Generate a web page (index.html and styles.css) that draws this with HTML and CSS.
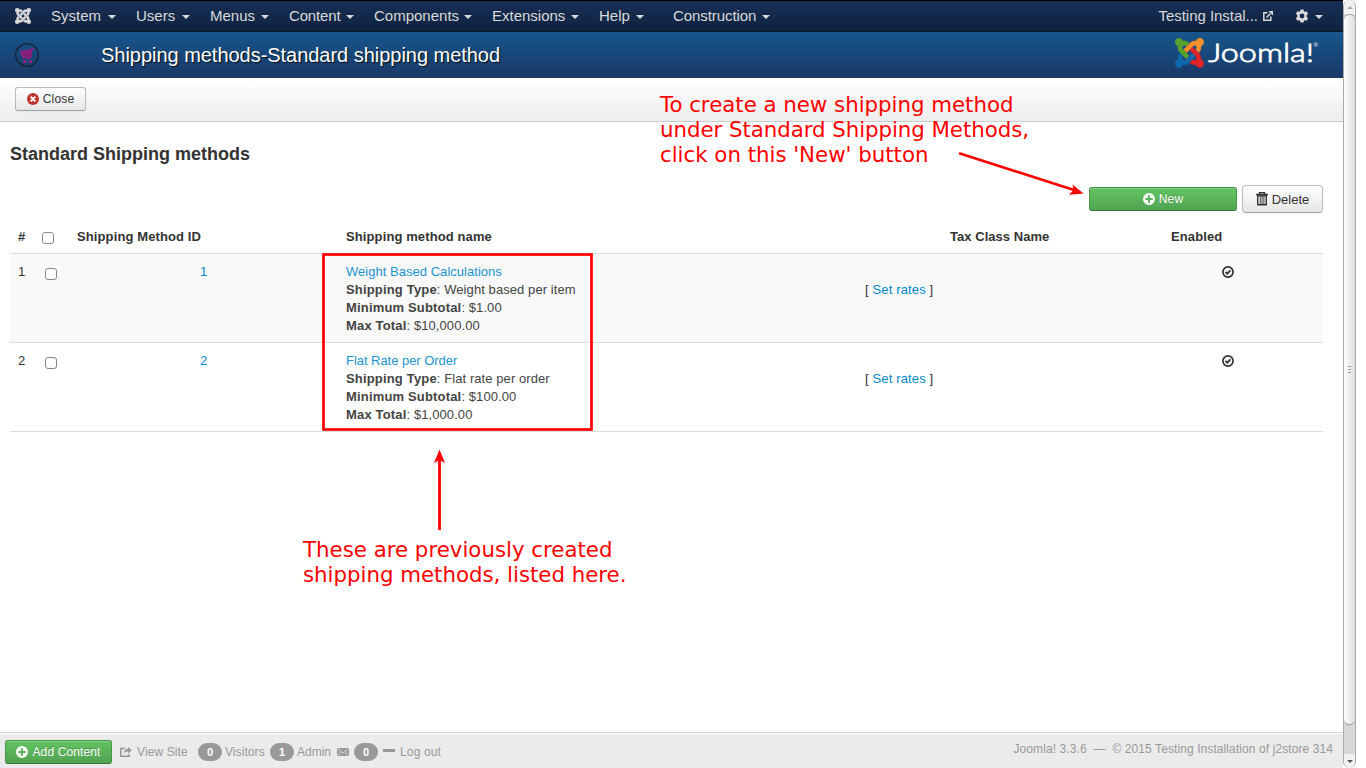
FILE: index.html
```html
<!DOCTYPE html>
<html lang="en">
<head>
<meta charset="utf-8">
<title>Shipping methods-Standard shipping method</title>
<link rel="stylesheet" href="styles.css">
</head>
<body>
<svg class="defs" width="0" height="0">
  <defs>
    <path id="arm" d="M16.719 14.759L14.22 17.26l-2.37 2.37-.462.466c-1.368 1.365-3.297 1.83-5.047 1.397-.327 1.424-1.604 2.49-3.13 2.49C1.438 23.983 0 22.547 0 20.772c0-1.518 1.055-2.789 2.469-3.123-.446-1.76.016-3.705 1.396-5.08l.179-.18 2.37 2.37-.184.181c-.769.779-.769 2.024 0 2.789.771.78 2.022.78 2.787 0l.465-.465 2.367-2.371 2.502-2.506z"/>
    <symbol id="plus" viewBox="0 0 12 12"><path fill-rule="evenodd" d="M6 0a6 6 0 1 0 0 12A6 6 0 0 0 6 0zM5 2.300h2V5h2.700v2H7v2.700H5V7H2.300V5H5z"/></symbol>
    <symbol id="check" viewBox="0 0 12 12"><circle cx="6" cy="6" r="5.100" fill="none" stroke="currentColor" stroke-width="1.700"/><path d="M3.500 6l1.800 1.700 3.100-3.300" fill="none" stroke="currentColor" stroke-width="1.800"/></symbol>
  </defs>
</svg>
<div class="window">
  <div class="page">
    <nav class="navbar">
      <svg class="brand" viewBox="0 0 24 24"><use href="#arm"/><use href="#arm" transform="rotate(90 12 12)"/><use href="#arm" transform="rotate(180 12 12)"/><use href="#arm" transform="rotate(270 12 12)"/></svg>
      <ul class="menu">
        <li class="w-system">System<i class="caret"></i></li>
        <li class="w-users">Users<i class="caret"></i></li>
        <li class="w-menus">Menus<i class="caret"></i></li>
        <li class="w-content">Content<i class="caret"></i></li>
        <li class="w-components">Components<i class="caret"></i></li>
        <li class="w-extensions">Extensions<i class="caret"></i></li>
        <li class="w-help">Help<i class="caret"></i></li>
        <li class="w-construction">Construction<i class="caret"></i></li>
      </ul>
      <div class="site">Testing Instal...
        <svg class="ext" viewBox="0 0 10 10"><path d="M4.500 1.700H.8v7.500h7V5.500M3.500 6.500l4-4" fill="none" stroke="currentColor" stroke-width="1.500"/><path d="M5.500 0H10v4.500z"/></svg>
      </div>
      <div class="gear">
        <svg viewBox="0 0 14 14"><path fill-rule="evenodd" d="M5.500.500h3l.4 1.700 1 .6 1.700-.6 1.500 2.500L11.800 6v2l1.300 1.300-1.500 2.500-1.700-.6-1 .6-.4 1.700h-3l-.4-1.700-1-.6-1.700.6L.900 9.300 2.200 8V6L.900 4.700l1.500-2.500 1.700.6 1-.6zM7 4.600a2.400 2.400 0 1 0 0 4.800 2.400 2.400 0 0 0 0-4.800z"/></svg><i class="caret"></i>
      </div>
    </nav>
    <header class="header">
      <svg class="cart" viewBox="0 0 24 24"><circle cx="12" cy="12" r="11.300" fill="none" stroke="#18222f" stroke-width="1.300"/><path d="M5 7.500l10-1 1.500-1.600 3 .2-.3 1-1.700.2-1.200 9.200H7.500z" fill="#922280"/><path d="M5.700 9.500l11.700-.7M6.300 12l10.800-.4M8.600 7.200l1.500 8M12 6.800l.5 8.500M15 6.500l-.5 9" stroke="#68216f" stroke-width=".5"/><path d="M8 17.200h3v2.900H8zM14 17.200h3v2.900h-3z" fill="#922280"/></svg>
      <h1>Shipping methods-Standard shipping method</h1>
      <svg class="logo" viewBox="0 0 146 32">
        <g class="mark" transform="translate(1.300 1.300) scale(1.180 1.220)"><use href="#arm" color="#1068ae"/><use href="#arm" color="#57a12b" transform="rotate(90 12 12)"/><use href="#arm" color="#fa9029" transform="rotate(180 12 12)"/><use href="#arm" color="#e32427" transform="rotate(270 12 12)"/></g>
        <text class="wordmark" x="34" y="24.500" textLength="106" lengthAdjust="spacingAndGlyphs">Joomla!</text>
        <text class="reg" x="139.500" y="9.500">®</text>
      </svg>
    </header>
    <div class="toolbar">
      <button class="btn close"><svg viewBox="0 0 12 12"><circle cx="6" cy="6" r="6" fill="#bd362f"/><path d="M3.700 3.700l4.600 4.600M8.300 3.700L3.700 8.300" stroke="#fff" stroke-width="1.800"/></svg><span>Close</span></button>
    </div>
    <main class="content">
      <h2>Standard Shipping methods</h2>
      <div class="actions">
        <button class="btn success new"><svg><use href="#plus"/></svg><span>New</span></button>
        <button class="btn delete"><svg viewBox="0 0 12 14"><path d="M3.500 1.800V.600h5v1.200M0 2.500h12M1.700 3v9.800h8.600V3" fill="none" stroke="currentColor" stroke-width="1.400"/><path d="M1 3.200h10v1.300H1z"/><path d="M4.300 4v9M6.100 4v9M7.900 4v9" stroke="currentColor" stroke-width=".9"/></svg><span>Delete</span></button>
      </div>
      <table class="methods">
        <colgroup><col class="c-num"><col class="c-check"><col class="c-id"><col class="c-name"><col class="c-tax"><col class="c-enabled"></colgroup>
        <thead>
          <tr><th>#</th><th class="check-head"><i class="box"></i></th><th>Shipping Method ID</th><th>Shipping method name</th><th class="tax-head">Tax Class Name</th><th class="enabled-head">Enabled</th></tr>
        </thead>
        <tbody>
          <tr class="odd">
            <td>1</td><td class="check-cell"><i class="box"></i></td><td class="center"><a>1</a></td>
            <td class="details"><a>Weight Based Calculations</a><br><b>Shipping Type</b>: Weight based per item<br><b>Minimum Subtotal</b>: $1.00<br><b>Max Total</b>: $10,000.00</td>
            <td class="rates"><br>[ <a>Set rates</a> ]</td><td class="center"><svg class="ok"><use href="#check"/></svg></td>
          </tr>
          <tr>
            <td>2</td><td class="check-cell"><i class="box"></i></td><td class="center"><a>2</a></td>
            <td class="details"><a class="flat">Flat Rate per Order</a><br><b>Shipping Type</b>: Flat rate per order<br><b>Minimum Subtotal</b>: $100.00<br><b>Max Total</b>: $1,000.00</td>
            <td class="rates"><br>[ <a>Set rates</a> ]</td><td class="center"><svg class="ok"><use href="#check"/></svg></td>
          </tr>
        </tbody>
      </table>
    </main>
    <footer class="status">
      <button class="btn success add"><svg><use href="#plus"/></svg><span>Add Content</span></button>
      <svg class="share" viewBox="0 0 12 10"><path d="M5 1.500H.8v7.700h8.400V7" fill="none" stroke="currentColor" stroke-width="1.500"/><path d="M8 0l4 3.300-4 3.200V4.500C6 4.500 5 5 4 6.500c0-3 1.500-4.500 4-4.700z"/></svg>
      <span class="view">View Site</span>
      <span class="badge">0</span><span class="visitors">Visitors</span>
      <span class="badge">1</span><span class="admin">Admin</span>
      <svg class="mail" viewBox="0 0 12 8"><path d="M0 0h12v8H0z"/><path d="M.500.500L6 5 11.500.500M.500 7.500L4.300 4M11.500 7.500L7.700 4" fill="none" stroke="#ebebeb" stroke-width=".8"/></svg>
      <span class="badge">0</span><i class="dash"></i><span class="logout">Log out</span>
      <span class="copy">Joomla! 3.3.6 &nbsp;—&nbsp; © 2015 Testing Installation of j2store 314</span>
    </footer>
  </div>
  <aside class="scrollbar">
    <div class="up"><i></i></div>
    <div class="thumb"><i></i><i></i><i></i></div>
    <div class="down"><i></i></div>
  </aside>
  <svg class="notes" viewBox="0 0 1356 768">
    <rect x="323.500" y="254.500" width="268" height="175" fill="none" stroke="#f00" stroke-width="2.700"/>
    <path d="M960 153.500L1074 190" stroke="#f00" stroke-width="2.500" stroke-linecap="round"/>
    <path d="M1083.500 193.500l-14.500 1.200 4.500-4.700-1-5.500z" fill="#f00"/>
    <path d="M439.500 530V460" stroke="#f00" stroke-width="2.800"/>
    <path d="M439.500 449.500l5.500 13.500-5.500-3-5.500 3z" fill="#f00"/>
    <text x="660" y="112" textLength="353.500">To create a new shipping method</text>
    <text x="660" y="137" textLength="369">under Standard Shipping Methods,</text>
    <text x="660" y="162" textLength="268.500">click on this 'New' button</text>
    <text x="303" y="557" textLength="309.500">These are previously created</text>
    <text x="303" y="582" textLength="323.500">shipping methods, listed here.</text>
  </svg>
</div>
</body>
</html>
```
FILE: styles.css
```css
* { box-sizing: border-box; }
body { margin: 0; background: #fff; color: #333; font: 13px/18px "Liberation Sans", Arial, sans-serif; overflow: hidden; }
.defs { position: absolute; }
.window { position: relative; display: flex; width: 1356px; height: 768px; }
.page { display: flex; flex-direction: column; width: 1343px; }
.navbar { display: flex; align-items: center; height: 32px; padding-left: 15px; border-top: 1px solid #000; border-bottom: 1px solid #0b1626; background: linear-gradient(#172f57, #10223e); color: #d9d9d9; font-size: 15px; }
.brand { width: 16px; height: 16px; margin-right: 20px; fill: #d9d9d9; stroke: #d9d9d9; stroke-width: .6px; }
.menu { display: flex; flex: 1; margin: 0; padding: 0; list-style: none; }
.menu li { display: flex; align-items: center; justify-content: space-between; margin-right: 20px; }
.w-system { width: 65px; }
.w-users { width: 54px; }
.w-menus { width: 59px; }
.menu .w-content { width: 65px; letter-spacing: -.15px; }
.w-components { width: 98px; }
.w-extensions { width: 87px; }
.menu .w-help { width: 45px; margin-right: 29px; }
.w-construction { width: 97px; letter-spacing: -.08px; }
.caret { width: 8px; border: 4px solid transparent; border-top-color: currentColor; border-bottom: 0; margin-top: 2px; }
.site { display: flex; align-items: center; gap: 5px; margin-right: 22px; letter-spacing: -.03px; }
.ext { width: 10px; height: 10px; fill: currentColor; }
.gear { display: flex; align-items: center; gap: 6px; margin-right: 20px; }
.gear svg { width: 14px; height: 14px; fill: currentColor; }
.header { display: flex; align-items: center; height: 46px; padding: 0 23px 0 15px; background: linear-gradient(#17568c, #1a3867); color: #fff; }
.cart { width: 24px; height: 24px; margin-right: 62px; }
h1 { flex: 1; margin: 0; font-size: 20px; font-weight: 400; line-height: 46px; letter-spacing: -.03px; text-shadow: 1px 1px 1px rgba(0,0,0,.8); }
.logo { width: 146px; height: 32px; margin-top: -5px; }
.mark { fill: currentColor; stroke: currentColor; stroke-width: .6px; }
.mark use { fill: currentColor; stroke: currentColor; }
.wordmark { font: 300 25.5px Lato, sans-serif; fill: #fff; stroke: #fff; stroke-width: .8px; }
.reg { font-size: 6px; fill: #fff; }
.toolbar { height: 44px; padding: 9px 15px 0; border-bottom: 1px solid #ccc; background: linear-gradient(#fff, #ededed); }
.btn { display: flex; align-items: center; justify-content: center; gap: 4px; padding: 0; border: 1px solid #bbb; border-bottom-color: #a2a2a2; border-radius: 3px; background: linear-gradient(#fff, #e6e6e6); box-shadow: inset 0 1px 0 rgba(255,255,255,.2), 0 1px 2px rgba(0,0,0,.05); color: #333; font: 12px/16px "Liberation Sans", Arial, sans-serif; }
.btn svg { width: 12px; height: 12px; margin-top: -1px; fill: currentColor; }
.close { width: 71px; height: 24px; letter-spacing: .2px; }
.success { border-color: #499249; border-bottom-color: #387038; background: linear-gradient(#62c462, #51a351); color: #fff; text-shadow: 0 -1px 0 rgba(0,0,0,.25); box-shadow: inset 0 1px 0 rgba(255,255,255,.2); }
.content { flex: 1; padding: 22px 20px 0 10px; }
h2 { margin: 0; font-size: 18px; line-height: 20px; }
.actions { display: flex; align-items: center; justify-content: flex-end; gap: 5px; margin-top: 21px; height: 28px; }
.new { width: 148px; height: 24px; letter-spacing: .2px; }
.delete { width: 81px; height: 28px; border-radius: 4px; font-size: 13px; }
.delete span { padding-top: 1px; }
.delete svg { width: 12px; height: 14px; }
.methods { width: 1313px; margin-top: 7px; border-collapse: separate; border-spacing: 0; table-layout: fixed; }
.methods th, .methods td { padding: 8px 0 8px 8px; text-align: left; vertical-align: top; }
.methods th { height: 33px; padding-bottom: 7px; letter-spacing: .11px; }
.methods td { height: 89px; padding-top: 9px; padding-bottom: 7px; border-top: 1px solid #ddd; }
.methods tr:last-child td { height: 90px; border-bottom: 1px solid #ddd; }
.methods thead tr:last-child th { height: 33px; }
.methods a { color: #08c; }
.odd td { background: #f9f9f9; }
.c-num { width: 24px; }
.c-check { width: 35px; }
.c-id { width: 269px; }
.c-name { width: 519px; }
.c-tax { width: 276px; }
.methods .center { padding-right: 8px; text-align: center; }
.methods .details { color: #444; letter-spacing: .08px; }
.details b { letter-spacing: .17px; }
.methods .details a { color: #1e93d2; letter-spacing: .03px; }
.methods .details .flat { letter-spacing: -.04px; }
.methods .rates { letter-spacing: .14px; }
.methods .tax-head { padding-left: 93px; letter-spacing: .04px; }
.methods .enabled-head { padding-left: 38px; }
.box { display: block; width: 12px; height: 12px; margin-top: 4px; border: 1px solid #888; border-radius: 3px; background: #fff; }
.methods .check-cell { padding-left: 11px; }
.check-cell .box { margin-top: 5px; }
.ok { width: 12px; height: 12px; margin-top: 3px; color: #333; }
.status { display: flex; align-items: center; height: 36px; padding: 3px 10px 0 5px; border-top: 1px solid #d4d4d4; box-shadow: inset 0 1px 0 #fafafa; background: #ebebeb; color: #999; font-size: 12px; }
.add { width: 107px; height: 24px; letter-spacing: .12px; }
.share { width: 12px; height: 10px; margin: 0 5px 0 8px; fill: currentColor; }
.view { width: 61px; letter-spacing: .1px; }
.badge { width: 24px; height: 18px; border-radius: 9px; background: #999; color: #fff; font-size: 11px; font-weight: 700; text-align: center; }
.visitors { width: 42px; margin: 0 3px; white-space: nowrap; letter-spacing: .08px; }
.admin { width: 37px; margin: 0 3px; }
.mail { width: 12px; height: 8px; margin-right: 5px; fill: currentColor; }
.dash { width: 12px; height: 3px; margin: -3px 5px 0; background: #999; }
.logout { flex: 1; letter-spacing: .15px; }
.copy { margin-top: -6px; white-space: nowrap; letter-spacing: .09px; }
.scrollbar { display: flex; flex-direction: column; width: 13px; border: 1px solid #aaa; border-width: 0 1px; border-radius: 7px; background: #d8d8d6; overflow: hidden; }
.up, .down { display: flex; align-items: center; justify-content: center; height: 14px; background: #f2f2f1; }
.up i { border: 3px solid transparent; border-top: 0; border-bottom-color: #aaa; }
.down i { border: 3px solid transparent; border-bottom: 0; border-top-color: #555; }
.thumb { display: flex; flex-direction: column; align-items: center; justify-content: center; gap: 2px; height: 711px; margin-bottom: 29px; border: 1px solid #999; border-width: 1px 0; border-radius: 7px; background: linear-gradient(90deg, #fff, #f3f2f1 40%, #dddcda); }
.thumb i { width: 3px; height: 1px; background: #999; }
.notes { position: absolute; inset: 0; width: 1356px; height: 768px; pointer-events: none; }
.notes text { font: 21.33px "DejaVu Sans", sans-serif; fill: #f00; }
```
